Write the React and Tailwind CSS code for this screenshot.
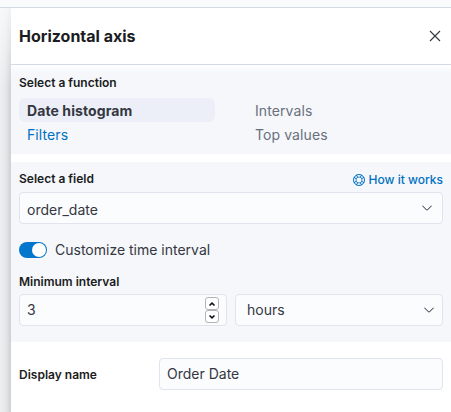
const Chevron = () => (
  <svg width="16" height="16" viewBox="0 0 16 16" fill="#343741" className="shrink-0">
    <path fillRule="nonzero" d="M13.069 5.157 8.384 9.768a.546.546 0 0 1-.768 0L2.93 5.158a.552.552 0 0 0-.771 0 .53.53 0 0 0 0 .759l4.684 4.61a1.65 1.65 0 0 0 2.312 0l4.684-4.61a.53.53 0 0 0 0-.76.552.552 0 0 0-.771 0Z" transform="translate(1.6 1.6) scale(.8)" />
  </svg>
);

const Label = ({ children }) => (
  <div className="text-[12px] leading-[18px] font-semibold text-[#1a1c21]">{children}</div>
);

const Spin = ({ d }) => (
  <span className="flex h-[13px] w-[14px] items-center justify-center rounded-[3px] border border-[#b4b4b4] bg-white">
    <svg width="8" height="8" viewBox="0 0 8 8" fill="none" stroke="#111" strokeWidth="1.6">
      <path d={d} />
    </svg>
  </span>
);

const field = 'flex h-8 items-center rounded-[4px] border border-[#e1e3ef] bg-[#fbfcfd]';

export default function App() {
  return (
    <div className="flex h-[412px] w-[451px] flex-col overflow-hidden bg-[#fafbfd] font-['Inter',sans-serif] text-[14px] leading-5 text-[#343741]">
      <div className="h-2 shrink-0 border-b border-[#d3dae6]" />
      <div className="flex min-h-0 flex-1">
        <div className="w-[11px] shrink-0 bg-linear-to-r from-[#eeeff1] via-[#e6e7e9] to-[#cfd0d2]">
          <div className="h-20 bg-linear-to-b from-[#fafbfd]/80 to-[#fafbfd]/0" />
        </div>
        <main className="flex min-w-0 flex-1 flex-col bg-white">
          <header className="flex h-[57px] shrink-0 items-center justify-between border-b border-[#d3dae6] pr-2 pl-2">
            <h1 className="text-[16px] leading-6 font-bold text-[#1a1c21]">Horizontal axis</h1>
            <svg width="16" height="16" viewBox="0 0 16 16" fill="none" stroke="#343741" strokeWidth="1.1">
              <path d="m3 3 10 10M13 3 3 13" />
            </svg>
          </header>

          <section className="h-[89px] shrink-0 bg-linear-to-b from-white to-[#f5f7fb] to-[8px] px-2 pt-[9px]">
            <Label>Select a function</Label>
            <div className="mt-[6px] grid grid-cols-[196px_196px] gap-x-8 leading-6 tracking-[0.09px]">
              <b className="h-6 rounded-[6px] bg-[#eceff7] pt-px pl-2">Date histogram</b>
              <span className="h-6 pt-px pl-2 text-[#69707d]">Intervals</span>
              <span className="h-6 pt-px pl-2 text-[#0071c2]">Filters</span>
              <span className="h-6 pt-px pl-2 text-[#69707d]">Top values</span>
            </div>
          </section>

          <section className="mt-2 h-[180px] shrink-0 bg-[#f5f7fb] px-2 pt-2">
            <div className="flex h-[18px] items-center justify-between">
              <Label>Select a field</Label>
              <a className="flex items-center gap-1 pt-[2px] text-[12px] leading-[18px] font-medium text-[#0071c2]">
                <svg width="12" height="12" viewBox="0 0 12 12" fill="none" stroke="#0071c2">
                  <circle cx="6" cy="6" r="5.5" />
                  <circle cx="6" cy="6" r="3" strokeWidth=".8" />
                  <path d="M.9 3.2 3 4.6M3.2 .9 4.6 3M8.8 .9 7.4 3M11.1 3.2 9 4.6M.9 8.8 3 7.4M3.2 11.1 4.6 9M8.8 11.1 7.4 9M11.1 8.8 9 7.4" />
                </svg>
                How it works
              </a>
            </div>
            <div className={`${field} mt-1 justify-between px-[7px]`}>
              <span className="pt-[3px]">order_date</span>
              <Chevron />
            </div>
            <div className="mt-4 flex h-5 items-center gap-2">
              <span className="flex h-4 w-7 items-center justify-end rounded-full bg-[#0077cc] pr-px">
                <span className="size-[14px] rounded-full bg-white" />
              </span>
              Customize time interval
            </div>
            <div className="mt-[13px]">
              <Label>Minimum interval</Label>
            </div>
            <div className="mt-[3px] flex gap-2">
              <div className={`${field} w-[208px] justify-between px-[7px]`}>
                <span>3</span>
                <span className="flex flex-col">
                  <Spin d="m1.5 5.5 2.5-2.4 2.5 2.4" />
                  <Spin d="m1.5 2.5 2.5 2.4 2.5-2.4" />
                </span>
              </div>
              <div className={`${field} w-[208px] justify-between pr-[5px] pl-[11px]`}>
                <span>hours</span>
                <Chevron />
              </div>
            </div>
          </section>

          <section className="flex items-center px-2 pt-4">
            <div className="w-[140px] pt-[2px]">
              <Label>Display name</Label>
            </div>
            <div className={`${field} flex-1 px-[7px]`}>Order Date</div>
          </section>
        </main>
      </div>
    </div>
  );
}
